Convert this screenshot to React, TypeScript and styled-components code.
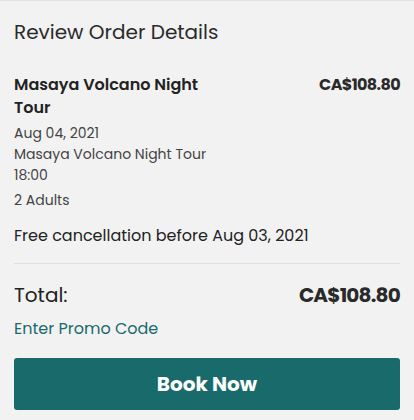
import React from "react";
import styled, { createGlobalStyle } from "styled-components";

const Global = createGlobalStyle`
  html, body { margin: 0; padding: 0; background: #f2f2f2; }
  body { font-family: "Poppins", "Inter", "Open Sans", sans-serif; }
`;

const Card = styled.section`
  box-sizing: border-box;
  width: 414px;
  min-height: 420px;
  background: #f2f2f2;
  border-top: 1px solid #e4e4e4;
  padding: 16px 14px 0;
  display: flex;
  flex-direction: column;
  color: #222;
`;

const Title = styled.h2`
  margin: 0;
  font-size: 20px;
  line-height: 30px;
  font-weight: 400;
  color: #2a2a2a;
`;

const ItemRow = styled.div`
  margin-top: 26px;
  display: flex;
  justify-content: space-between;
  align-items: flex-start;
`;

const ItemName = styled.div`
  max-width: 200px;
  font-size: 16px;
  line-height: 23px;
  font-weight: 600;
  color: #222;
`;

const Price = styled.div<{ $size?: number }>`
  font-size: ${(p) => p.$size ?? 16}px;
  line-height: ${(p) => ((p.$size ?? 16) === 16 ? 23 : 30)}px;
  font-weight: 700;
  letter-spacing: -0.04em;
  color: #2a2a2a;
  white-space: nowrap;
`;

const Details = styled.div`
  margin-top: 4px;
  display: flex;
  flex-direction: column;
  font-size: 14px;
  line-height: 21px;
  color: #444;
`;

const Guests = styled.div`
  margin-top: 4px;
  font-size: 14px;
  line-height: 21px;
  color: #444;
`;

const Cancellation = styled.div`
  margin-top: 13px;
  font-size: 16px;
  line-height: 24px;
  color: #222;
`;

const Divider = styled.hr`
  margin: 15px 0 0;
  border: 0;
  height: 1px;
  background: #e0e0e0;
`;

const TotalRow = styled.div`
  margin-top: 16px;
  display: flex;
  justify-content: space-between;
  align-items: center;
`;

const TotalLabel = styled.div`
  font-size: 20px;
  line-height: 30px;
  font-weight: 400;
  color: #222;
`;

const PromoLink = styled.a`
  margin-top: 7px;
  font-size: 16px;
  line-height: 24px;
  color: #1a6b6b;
  text-decoration: none;
  cursor: pointer;
  align-self: flex-start;
`;

const BookButton = styled.button`
  margin-top: 17px;
  height: 52px;
  width: 100%;
  border: 0;
  border-radius: 3px;
  background: #196b6b;
  color: #fff;
  font-family: inherit;
  font-size: 20px;
  font-weight: 700;
  cursor: pointer;
`;

export default function App() {
  return (
    <>
      <Global />
      <Card>
        <Title>Review Order Details</Title>
        <ItemRow>
          <ItemName>Masaya Volcano Night Tour</ItemName>
          <Price>CA$108.80</Price>
        </ItemRow>
        <Details>
          <span>Aug 04, 2021</span>
          <span>Masaya Volcano Night Tour</span>
          <span>18:00</span>
        </Details>
        <Guests>2 Adults</Guests>
        <Cancellation>Free cancellation before Aug 03, 2021</Cancellation>
        <Divider />
        <TotalRow>
          <TotalLabel>Total:</TotalLabel>
          <Price $size={20}>CA$108.80</Price>
        </TotalRow>
        <PromoLink>Enter Promo Code</PromoLink>
        <BookButton>Book Now</BookButton>
      </Card>
    </>
  );
}
